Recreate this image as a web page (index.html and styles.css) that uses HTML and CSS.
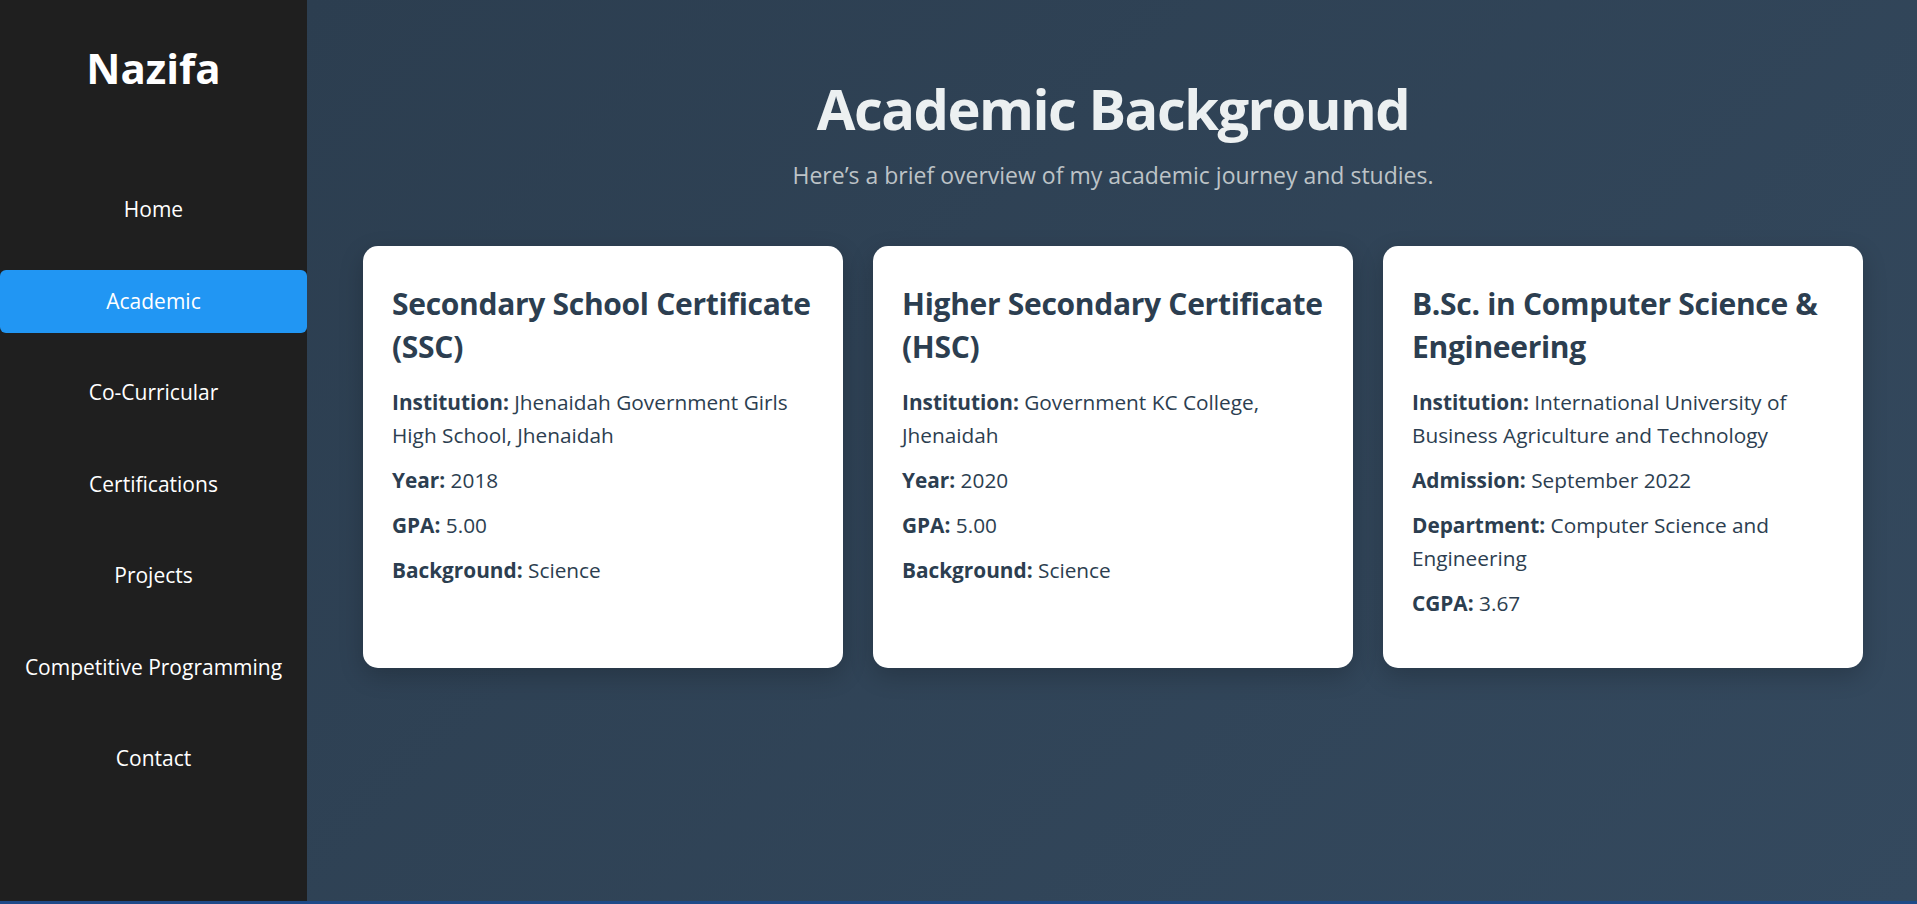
FILE: index.html
```html
<!DOCTYPE html>
<html lang="en">
<head>
<meta charset="utf-8">
<title>Nazifa - Academic</title>
<link rel="stylesheet" href="styles.css">
</head>
<body>
<div class="layout">
  <aside class="sidebar">
    <h2 class="brand">Nazifa</h2>
    <nav class="nav">
      <a class="nav-item" href="#">Home</a>
      <a class="nav-item active" href="#">Academic</a>
      <a class="nav-item" href="#">Co-Curricular</a>
      <a class="nav-item" href="#">Certifications</a>
      <a class="nav-item" href="#">Projects</a>
      <a class="nav-item" href="#">Competitive Programming</a>
      <a class="nav-item" href="#">Contact</a>
    </nav>
  </aside>
  <main class="main">
    <h1 class="title">Academic Background</h1>
    <p class="subtitle">Here’s a brief overview of my academic journey and studies.</p>
    <div class="cards">
      <section class="card">
        <h3>Secondary School Certificate (SSC)</h3>
        <p><strong>Institution:</strong> Jhenaidah Government Girls High School, Jhenaidah</p>
        <p><strong>Year:</strong> 2018</p>
        <p><strong>GPA:</strong> 5.00</p>
        <p><strong>Background:</strong> Science</p>
      </section>
      <section class="card">
        <h3>Higher Secondary Certificate (HSC)</h3>
        <p><strong>Institution:</strong> Government KC College, Jhenaidah</p>
        <p><strong>Year:</strong> 2020</p>
        <p><strong>GPA:</strong> 5.00</p>
        <p><strong>Background:</strong> Science</p>
      </section>
      <section class="card">
        <h3>B.Sc. in Computer Science &amp; Engineering</h3>
        <p><strong>Institution:</strong> International University of Business Agriculture and Technology</p>
        <p><strong>Admission:</strong> September 2022</p>
        <p><strong>Department:</strong> Computer Science and Engineering</p>
        <p><strong>CGPA:</strong> 3.67</p>
      </section>
    </div>
  </main>
</div>
</body>
</html>
```

FILE: styles.css
```css
* { box-sizing: border-box; }

html, body {
  margin: 0;
  padding: 0;
}

body {
  font-family: "Segoe UI", "Open Sans", "Noto Sans", sans-serif;
  background: #1f4a88;
  height: 904px;
  overflow: hidden;
}

.layout {
  display: flex;
  height: 901px;
}

.sidebar {
  width: 307px;
  flex: none;
  background: #1f1f1f;
  color: #fff;
  padding-top: 43px;
}

.brand {
  margin: 0 0 85px;
  font-size: 42px;
  line-height: 50px;
  font-weight: 700;
  text-align: center;
  color: #fff;
}

.nav {
  display: flex;
  flex-direction: column;
  gap: 28.5px;
}

.nav-item {
  display: block;
  height: 63px;
  line-height: 63px;
  text-align: center;
  color: #fff;
  text-decoration: none;
  font-size: 21px;
  border-radius: 6px;
}

.nav-item.active {
  background: #2196f3;
}

.main {
  flex: 1;
  background: linear-gradient(135deg, #2c3e50 0%, #34495e 100%);
  padding: 75px 54px 0 56px;
  text-align: center;
}

.title {
  margin: 0;
  font-size: 56px;
  line-height: 67px;
  font-weight: 700;
  letter-spacing: -1.5px;
  color: #ecf0f1;
}

.subtitle {
  margin: 18px 0 0;
  font-size: 23px;
  line-height: 30px;
  color: #bdc3c7;
}

.cards {
  display: grid;
  grid-template-columns: repeat(3, 1fr);
  gap: 30px;
  margin-top: 56px;
  text-align: left;
}

.card {
  background: #fff;
  border-radius: 15px;
  padding: 36px 24px 36px 29px;
  color: #2c3e50;
  box-shadow: 0 8px 24px rgba(0, 0, 0, 0.2);
}

.card h3 {
  margin: 0 0 18px;
  font-size: 30px;
  line-height: 43px;
  font-weight: 700;
  letter-spacing: -0.3px;
  color: #2c3e50;
}

.card p {
  margin: 0 0 12px;
  font-size: 20.8px;
  line-height: 33px;
}

.card strong {
  font-weight: 700;
}
```
